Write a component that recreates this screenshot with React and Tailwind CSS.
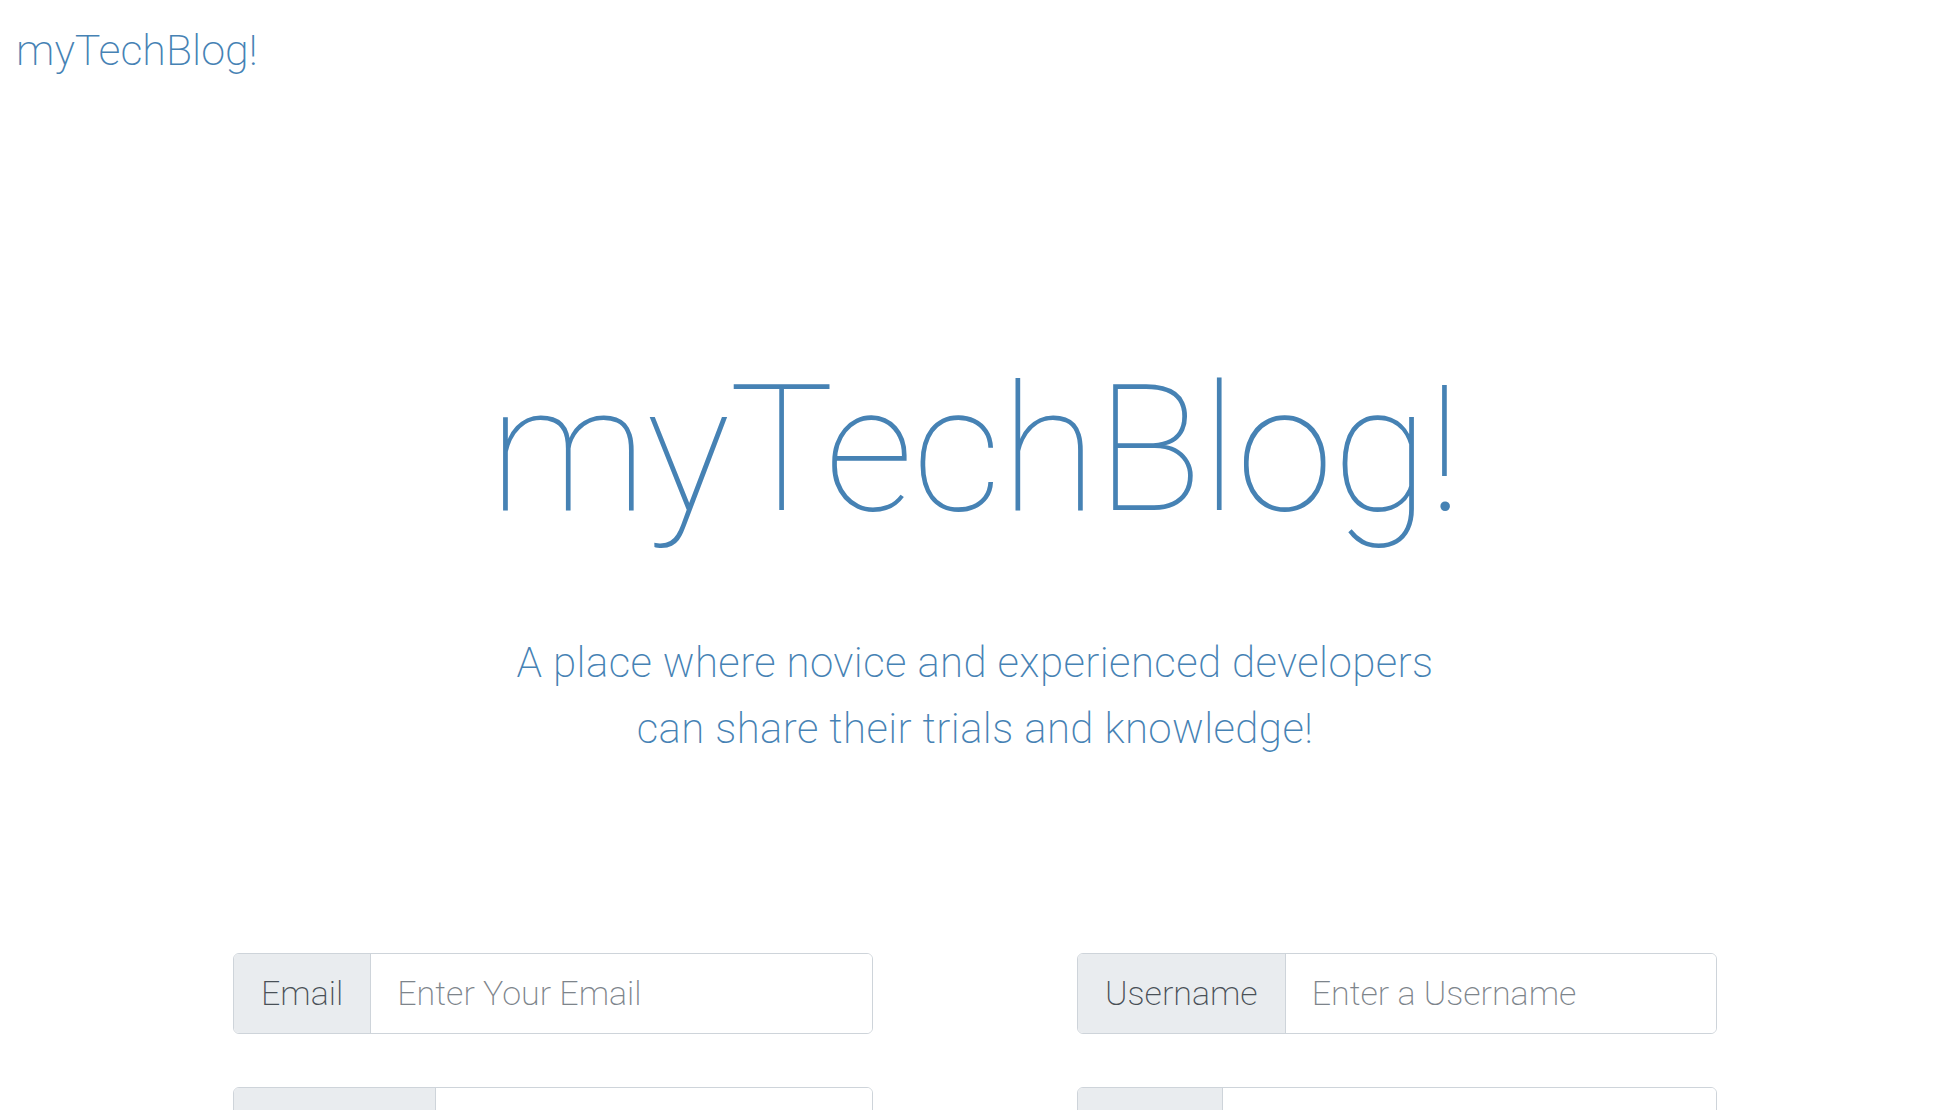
import React from 'react';

const fields = [
  { label: 'Email', placeholder: 'Enter Your Email', type: 'email' },
  { label: 'Username', placeholder: 'Enter a Username', type: 'text' },
  { label: 'Password', placeholder: 'Enter a Password', type: 'password' },
  { label: 'Name', placeholder: 'Enter Your Name', type: 'text' },
];

function InputGroup({ label, placeholder, type }) {
  return (
    <div className="flex h-[81px] rounded-[6px] border border-[#ced4da] overflow-hidden">
      <span className="flex items-center px-[27px] bg-[#e9ecef] border-r border-[#ced4da] text-[34px] font-extralight text-[#495057]">
        {label}
      </span>
      <input
        type={type}
        placeholder={placeholder}
        className="flex-1 min-w-0 px-[26px] text-[34px] font-extralight text-[#495057] placeholder:text-[#7d848b] bg-white outline-none"
      />
    </div>
  );
}

export default function App() {
  return (
    <div className="min-h-screen bg-white font-['Roboto',sans-serif] font-extralight text-[#4682b4]">
      <nav className="pt-[19px] pl-[16px]">
        <a href="#" className="text-[43px] leading-[63px]">myTechBlog!</a>
      </nav>

      <header className="mt-[280px] text-center">
        <h1 className="text-[176px] leading-none font-thin tracking-[-1px]">myTechBlog!</h1>
        <p className="mt-[92px] mx-auto max-w-[960px] text-[42px] leading-[66px] tracking-[0.4px]">
          A place where novice and experienced developers can share their trials and knowledge!
        </p>
      </header>

      <form className="mt-[191px] mx-auto w-[1484px] grid grid-cols-2 gap-x-[204px] gap-y-[53px] pb-20">
        {fields.map((f) => (
          <InputGroup key={f.label} {...f} />
        ))}
      </form>
    </div>
  );
}
